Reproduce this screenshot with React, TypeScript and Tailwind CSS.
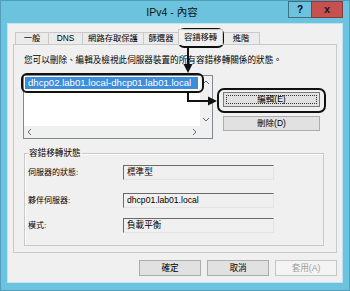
import React from "react";

const tabs = [
  { label: "一般", className: "w-[34px]" },
  { label: "DNS", className: "w-[35px]" },
  { label: "網路存取保護", className: "w-[62px]" },
  { label: "篩選器", className: "w-[36px]" },
  { label: "容錯移轉", className: "w-[45px]", active: true },
  { label: "進階", className: "w-[38px]" },
];

const fields = [
  { label: "伺服器的狀態:", value: "標準型", className: "mt-[6px]" },
  { label: "夥伴伺服器:", value: "dhcp01.lab01.local", className: "mt-[13px]" },
  { label: "模式:", value: "負載平衡", className: "mt-[10px]" },
];

function Chevron({ dir }: { dir: "up" | "down" | "left" | "right" }) {
  const points = {
    up: "1,5 4,2 7,5",
    down: "1,3 4,6 7,3",
    left: "5,1 2,4 5,7",
    right: "3,1 6,4 3,7",
  }[dir];
  return (
    <svg width="8" height="8" viewBox="0 0 8 8">
      <polyline points={points} fill="none" stroke="#666" strokeWidth="1" />
    </svg>
  );
}

function Callouts() {
  return (
    <svg
      className="pointer-events-none absolute left-[-1px] top-[-1px]"
      width="350"
      height="291"
      viewBox="0 0 350 291"
    >
      <g fill="none" stroke="#111" strokeWidth="2">
        <rect x="179" y="29" width="44" height="18" rx="5" />
        <rect x="22" y="74" width="181" height="18" rx="5" />
        <rect x="218" y="89" width="107" height="23" rx="6" />
        <line x1="188" y1="48" x2="188" y2="65" />
        <polyline points="188,93 188,101 209,101" />
      </g>
      <polygon points="183.5,64 192.5,64 188,73" fill="#111" />
      <polygon points="208,96.5 208,105.5 217,101" fill="#111" />
    </svg>
  );
}

export default function App() {
  return (
    <div className="relative flex h-[291px] w-[350px] flex-col border border-[#4f9fbc] bg-[#6bc3de] font-['Liberation_Sans','Noto_Sans_CJK_TC',sans-serif] text-black">
      {/* title bar */}
      <div className="grid h-[22px] grid-cols-[1fr_auto_1fr] items-start pr-[6px]">
        <div />
        <div className="pt-[4px] text-[10.5px] leading-[14px] text-[#111]">IPv4 - 內容</div>
        <div className="flex justify-end">
          <div className="flex h-[17px] w-[24px] items-center justify-center border border-[#3f6f80] bg-[#6bc3de] text-[10px] font-bold leading-none">
            ?
          </div>
          <div className="-ml-px flex h-[17px] w-[32px] items-center justify-center border border-[#8c3b3b] bg-[#c75050] text-[11px] font-bold leading-none text-[#1b1b1b]">
            x
          </div>
        </div>
      </div>

      {/* client */}
      <div className="mx-[6px] flex h-[260px] flex-col border border-[#bfe3f0] bg-[#f0f0f0] px-[5px]">
        <div className="mt-[6px] flex h-[14px] items-end pl-[2px]">
          {tabs.map((t, i) =>
            t.active ? (
              <div
                key={t.label}
                className={`${t.className} relative z-10 -mb-px -ml-px flex h-[16px] items-center justify-center border border-b-0 border-[#c9c9c9] bg-[#f0f0f0] text-[8.3px] leading-none`}
              >
                {t.label}
              </div>
            ) : (
              <div
                key={t.label}
                className={`${t.className} ${i === 0 ? "" : "-ml-px"} flex h-[12px] items-center justify-center border border-b-0 border-[#c9c9c9] bg-[#ebebeb] text-[8.3px] leading-none`}
              >
                {t.label}
              </div>
            )
          )}
        </div>

        {/* tab page */}
        <div className="flex h-[209px] flex-col border border-[#c9c9c9] bg-[#f0f0f0]">
          <p className="ml-[10px] mt-[9px] text-[8.6px] leading-[12px]">
            您可以刪除、編輯及檢視此伺服器裝置的所有容錯移轉關係的狀態。
          </p>

          <div className="ml-[9px] mt-[9px] flex">
            <div className="grid h-[64px] w-[190px] grid-cols-[1fr_12px] grid-rows-[1fr_12px] border border-[#828790] bg-white">
              <div className="pl-[1px] pt-[1px]">
                <div className="h-[12px] w-[173px] bg-[#3c8ddc] pl-[3px] text-[9.6px] leading-[12px] text-white">
                  dhcp02.lab01.local-dhcp01.lab01.local
                </div>
              </div>
              <div className="flex flex-col items-center justify-between bg-[#f0f0f0] py-[3px]">
                <Chevron dir="up" />
                <Chevron dir="down" />
              </div>
              <div className="flex items-center justify-between bg-[#f0f0f0] px-[2px]">
                <Chevron dir="left" />
                <Chevron dir="right" />
              </div>
              <div className="bg-[#f0f0f0]" />
            </div>

            <div className="ml-[10px] flex flex-col pt-[17px]">
              <button className="h-[15px] w-[97px] border border-[#7a7a7a] bg-[#e1e1e1] p-[2px]">
                <div className="flex h-full w-full items-center justify-center border border-dotted border-[#333] text-[8.5px] leading-none">
                  編輯(E)
                </div>
              </button>
              <button className="mt-[9px] flex h-[15px] w-[97px] items-center justify-center border border-[#adadad] bg-[#e1e1e1] text-[8.5px] leading-none">
                刪除(D)
              </button>
            </div>
          </div>

          <fieldset className="ml-[10px] mt-[8px] h-[99px] w-[300px] border border-[#c9c9c9] pl-[3px] shadow-[inset_1px_1px_0_#fff]">
            <legend className="px-[1px] text-[8.6px] leading-[12px]">容錯移轉狀態</legend>
            {fields.map((f) => (
              <div key={f.label} className={`${f.className} flex items-center`}>
                <span className="w-[95px] text-[8px] leading-[12px]">{f.label}</span>
                <div className="h-[15px] w-[151px] border border-b-[#e3e3e3] border-l-[#6b6b6b] border-r-[#e3e3e3] border-t-[#6b6b6b] bg-[#f0f0f0] pl-[3px] text-[8.6px] leading-[13px]">
                  {f.value}
                </div>
              </div>
            ))}
          </fieldset>
        </div>

        {/* dialog buttons */}
        <div className="mt-[7px] flex justify-end gap-[6px]">
          <button className="flex h-[16px] w-[62px] items-center justify-center border border-[#adadad] bg-[#e1e1e1] text-[8.6px] leading-none">
            確定
          </button>
          <button className="flex h-[16px] w-[62px] items-center justify-center border border-[#adadad] bg-[#e1e1e1] text-[8.6px] leading-none">
            取消
          </button>
          <button className="flex h-[16px] w-[62px] items-center justify-center border border-[#c6c6c6] bg-[#f4f4f4] text-[8.6px] leading-none text-[#a0a0a0]">
            套用(A)
          </button>
        </div>
      </div>

      <Callouts />
    </div>
  );
}
